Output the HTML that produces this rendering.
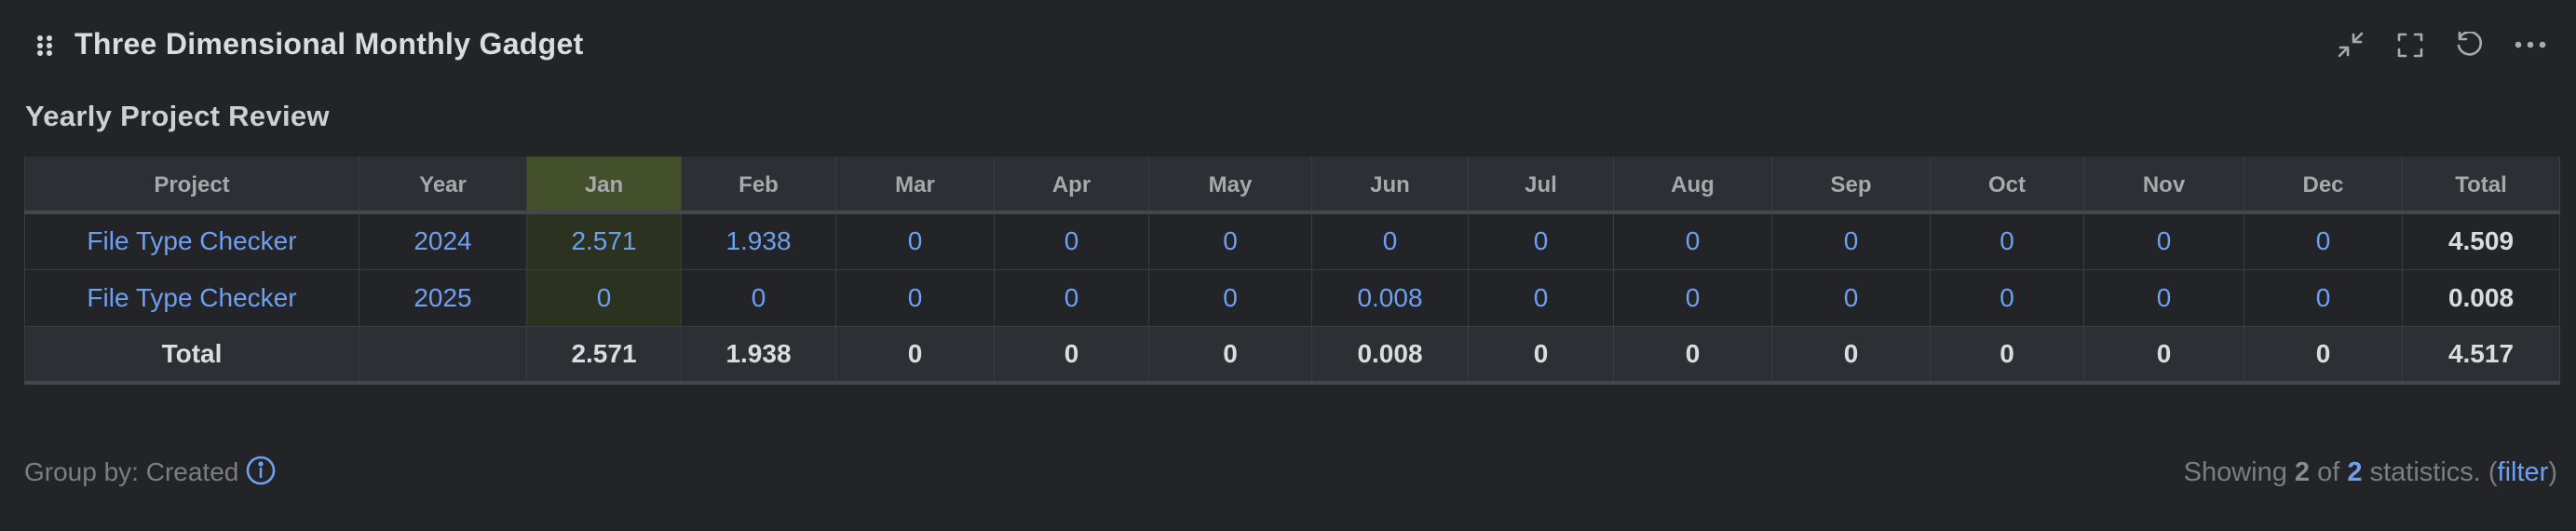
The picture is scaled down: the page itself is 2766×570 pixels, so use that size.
<!DOCTYPE html>
<html><head><meta charset="utf-8"><style>
*{margin:0;padding:0;box-sizing:border-box}
body{width:2766px;height:570px;background:#232428;font-family:"Liberation Sans",sans-serif;position:relative;overflow:hidden;color:#ddd}
.title{position:absolute;left:80px;top:28px;font-size:32px;font-weight:bold;color:#dcdcdf;line-height:38px;letter-spacing:0.3px}
.sub{position:absolute;left:27px;top:107px;font-size:31px;font-weight:bold;color:#cfcfd3;line-height:36px;letter-spacing:0.3px}
table{position:absolute;left:26px;top:168px;width:2722px;border-collapse:collapse;table-layout:fixed}
td,th{text-align:center;border-left:1px solid #3b3c41;border-right:1px solid #3b3c41;font-size:28px;padding:0}
th{background:#2e2f34;color:#a7a8ac;font-weight:bold;font-size:24px;height:60px;border-bottom:4px solid #46474c;padding-top:4px}
tr.d td{background:#232428;color:#6f9ff0;height:61px;border-bottom:1px solid #3b3c41}
tr.t td{background:#2e2f34;color:#dcdcdf;font-weight:bold;height:61px;border-bottom:4px solid #46474c}
tr.d td.tot{color:#dcdcdf;font-weight:bold}
th.j{background:#43502b}
tr.d td.j{background:#2b3220}
.foot{position:absolute;top:489px;font-size:28px;color:#7c7d81;line-height:36px}
.ic{position:absolute;top:34px}
</style></head><body>
<svg class="ic" style="left:39px;top:38px" width="20" height="22"><g fill="#d8d8db"><circle cx="4" cy="3" r="3"/><circle cx="14" cy="3" r="3"/><circle cx="4" cy="11" r="3"/><circle cx="14" cy="11" r="3"/><circle cx="4" cy="19" r="3"/><circle cx="14" cy="19" r="3"/></g></svg>
<div class="title">Three Dimensional Monthly Gadget</div>
<svg class="ic" style="left:2510px" width="28" height="28" fill="none" stroke="#a9aaae" stroke-width="2.6" stroke-linecap="round" stroke-linejoin="round"><path d="M26 2L18 10M17 3V11H25M2 26L10 18M3 17H11V25"/></svg>
<svg class="ic" style="left:2574px" width="28" height="28" fill="none" stroke="#a9aaae" stroke-width="2.6" stroke-linecap="round" stroke-linejoin="round"><path d="M2 9V3H9M19 3H26V9M26 19V26H19M9 26H2V19"/></svg>
<svg class="ic" style="left:2638px" width="28" height="28" fill="none" stroke="#a9aaae" stroke-width="2.6" stroke-linecap="round" stroke-linejoin="round"><path d="M3 7A12 12 0 1 1 2 15M3 1V8H10"/></svg>
<svg class="ic" style="left:2700px;top:44px" width="34" height="8" fill="#a9aaae"><circle cx="4" cy="4" r="3.3"/><circle cx="17" cy="4" r="3.3"/><circle cx="30" cy="4" r="3.3"/></svg>
<div class="sub">Yearly Project Review</div>
<table>
<colgroup><col style="width:359px"><col style="width:180px"><col style="width:166px"><col style="width:166px"><col style="width:170px"><col style="width:166px"><col style="width:175px"><col style="width:168px"><col style="width:156px"><col style="width:170px"><col style="width:170px"><col style="width:165px"><col style="width:172px"><col style="width:170px"><col style="width:169px"></colgroup>
<tr><th>Project</th><th>Year</th><th class="j">Jan</th><th>Feb</th><th>Mar</th><th>Apr</th><th>May</th><th>Jun</th><th>Jul</th><th>Aug</th><th>Sep</th><th>Oct</th><th>Nov</th><th>Dec</th><th>Total</th></tr>
<tr class="d"><td>File Type Checker</td><td>2024</td><td class="j">2.571</td><td>1.938</td><td>0</td><td>0</td><td>0</td><td>0</td><td>0</td><td>0</td><td>0</td><td>0</td><td>0</td><td>0</td><td class="tot">4.509</td></tr>
<tr class="d"><td>File Type Checker</td><td>2025</td><td class="j">0</td><td>0</td><td>0</td><td>0</td><td>0</td><td>0.008</td><td>0</td><td>0</td><td>0</td><td>0</td><td>0</td><td>0</td><td class="tot">0.008</td></tr>
<tr class="t"><td>Total</td><td></td><td>2.571</td><td>1.938</td><td>0</td><td>0</td><td>0</td><td>0.008</td><td>0</td><td>0</td><td>0</td><td>0</td><td>0</td><td>0</td><td>4.517</td></tr>
</table>
<div class="foot" style="left:26px">Group by: Created <svg style="vertical-align:-5px" width="32" height="32" fill="none" stroke="#6f9ff0" stroke-width="2.6"><circle cx="16" cy="16" r="14"/><path d="M16 14V23" stroke-linecap="round"/><circle cx="16" cy="9" r="1.3" fill="#6f9ff0"/></svg></div>
<div class="foot" style="right:20px;font-size:29px">Showing <b style="color:#8a8b8f">2</b> of <b style="color:#6f9ff0">2</b> statistics. (<span style="color:#6f9ff0">filter</span>)</div>
</body></html>
